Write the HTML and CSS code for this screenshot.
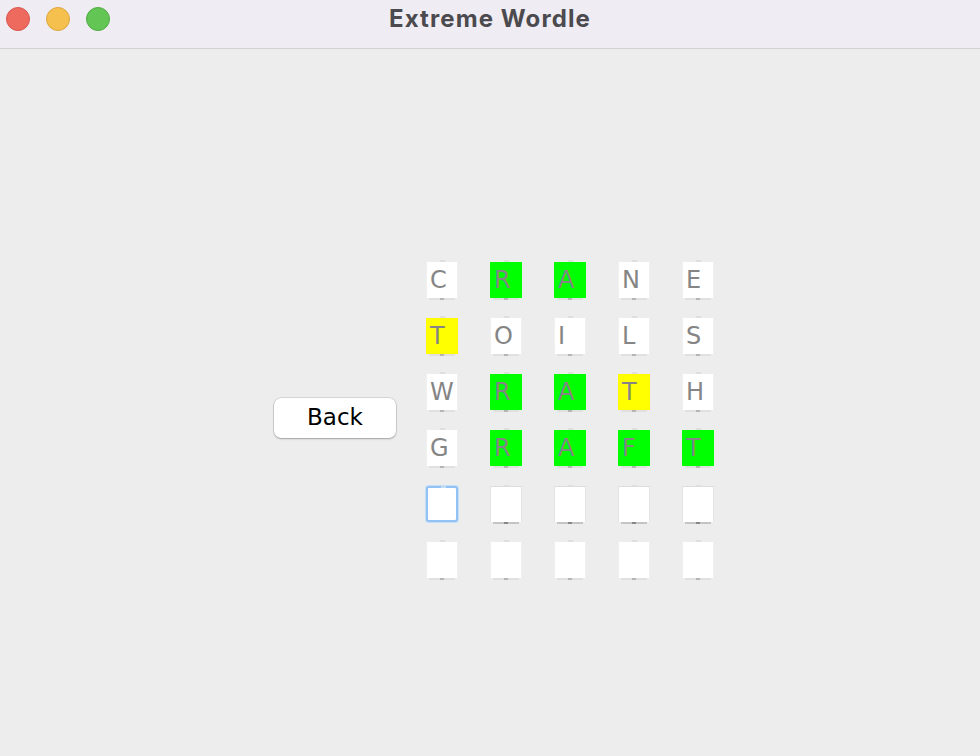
FILE: index.html
```html
<!DOCTYPE html>
<html lang="en">
<head>
<meta charset="utf-8">
<title>Extreme Wordle</title>
<link rel="stylesheet" href="styles.css">
</head>
<body>
<div class="window">
  <header class="titlebar">
    <div class="lights">
      <span class="light red"></span>
      <span class="light yellow"></span>
      <span class="light green"></span>
    </div>
    <h1 class="title">Extreme Wordle</h1>
  </header>
  <main class="content">
    <button class="back">Back</button>
    <div class="board">
      <div class="cell">C</div><div class="cell hit">R</div><div class="cell hit">A</div><div class="cell">N</div><div class="cell">E</div>
      <div class="cell near">T</div><div class="cell">O</div><div class="cell">I</div><div class="cell">L</div><div class="cell">S</div>
      <div class="cell">W</div><div class="cell hit">R</div><div class="cell hit">A</div><div class="cell near">T</div><div class="cell">H</div>
      <div class="cell">G</div><div class="cell hit">R</div><div class="cell hit">A</div><div class="cell hit">F</div><div class="cell hit">T</div>
      <div class="cell focus"></div><div class="cell empty"></div><div class="cell empty"></div><div class="cell empty"></div><div class="cell empty"></div>
      <div class="cell"></div><div class="cell"></div><div class="cell"></div><div class="cell"></div><div class="cell"></div>
    </div>
  </main>
</div>
</body>
</html>
```
FILE: styles.css
```css
html, body {
  margin: 0;
  padding: 0;
}
body {
  background: #ededed;
  font-family: "DejaVu Sans", "Liberation Sans", sans-serif;
}
.window {
  width: 980px;
  height: 756px;
  display: flex;
  flex-direction: column;
}
.titlebar {
  height: 48px;
  box-sizing: content-box;
  background: #efedf3;
  border-bottom: 1px solid #d3d1d6;
  display: flex;
  align-items: flex-start;
  position: relative;
}
.lights {
  display: flex;
  gap: 16px;
  padding: 7px 0 0 6px;
}
.light {
  width: 22px;
  height: 22px;
  border-radius: 50%;
  border: 1px solid;
}
.red { background: #ee6a5f; border-color: #d5574d; }
.yellow { background: #f6c04f; border-color: #dca540; }
.green { background: #62c554; border-color: #52ab45; }
.title {
  position: absolute;
  left: 0;
  right: 0;
  top: 0;
  margin: 0;
  line-height: 38px;
  text-align: center;
  font-family: Inter, "Liberation Sans", sans-serif;
  font-weight: 700;
  font-size: 24px;
  letter-spacing: 1.1px;
  color: #4b4a4e;
}
.content {
  flex: 1;
  display: flex;
  align-items: flex-start;
  padding: 213px 0 0 274px;
}
.back {
  margin-top: 136px;
  width: 122px;
  height: 40px;
  background: #fff;
  border: none;
  border-radius: 7px;
  box-shadow: 0 0 0 0.5px rgba(0,0,0,0.18), 0 1px 2px rgba(0,0,0,0.25);
  font-family: "DejaVu Sans", sans-serif;
  font-size: 23px;
  color: #000;
  padding: 0 0 2px;
  margin-right: 30px;
}
.board {
  display: grid;
  grid-template-columns: repeat(5, 32px);
  grid-auto-rows: 36px;
  column-gap: 32px;
  row-gap: 20px;
}
.cell {
  position: relative;
  background: #fff;
  box-sizing: border-box;
  border-left: 1px solid #f0f0f0;
  border-right: 1px solid #f0f0f0;
  color: #858585;
  font-size: 24px;
  line-height: 37px;
  padding-left: 3px;
}
.cell::before {
  content: "";
  position: absolute;
  left: 13px;
  top: -2px;
  width: 5px;
  height: 2px;
  background: #dedede;
}
.cell::after {
  content: "";
  position: absolute;
  left: 2px;
  right: 2px;
  bottom: -2px;
  height: 2px;
  background: #e0e0e0;
  background-image: linear-gradient(90deg, transparent 11px, #b4b4b4 11px, #b4b4b4 15px, transparent 15px);
}
.hit {
  background: #00ff00;
  border-color: #00ff00;
}
.near {
  background: #ffff00;
  border-color: #ffff00;
}
.empty {
  border-top: 1px solid #dcdcdc;
  border-left-color: #e4e4e4;
  border-right-color: #e4e4e4;
}
.empty::after {
  background-image: linear-gradient(90deg, #c4c4c4 0, #c4c4c4 11px, #888 11px, #888 15px, #c4c4c4 15px);
}
.focus {
  border: 2px solid #93c2f5;
  border-radius: 3px;
  box-shadow: 0 0 0 1px #c4ddf9;
}
.focus::before {
  background: #c5dcf5;
}
.focus::after {
  display: none;
}
```
